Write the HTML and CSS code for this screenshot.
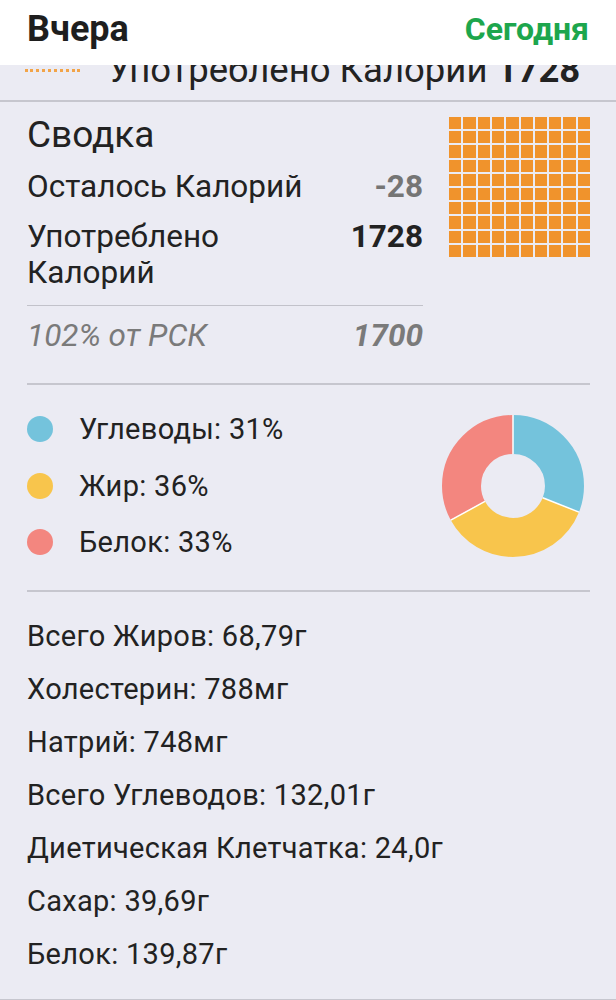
FILE: index.html
```html
<!DOCTYPE html>
<html lang="ru">

<head>
    <meta charset="UTF-8">
    <meta name="viewport" content="width=device-width, initial-scale=1.0">
    <title>Сводка</title>
    <link rel="stylesheet" href="styles.css">
</head>

<body>
    <header class="topbar">
        <span class="day">Вчера</span>
        <a class="today" href="#">Сегодня</a>
    </header>

    <!-- legend row of the chart above, scrolled under the bar -->
    <div class="peek">
        <div class="peek-line">
            <span class="dots"></span>
            <span class="peek-text">Употреблено Калорий <b>1728</b></span>
        </div>
    </div>

    <section class="summary">
        <div class="summary-info">
            <h2 class="title">Сводка</h2>
            <div class="row">
                <span>Осталось Калорий</span>
                <span class="remain">-28</span>
            </div>
            <div class="row">
                <span>Употреблено<br>Калорий</span>
                <b>1728</b>
            </div>
            <div class="row goal">
                <span>102% от РСК</span>
                <b>1700</b>
            </div>
        </div>
        <div class="squares" id="squares"></div>
    </section>

    <section class="macros">
        <ul class="legend">
            <li><span class="dot carbs"></span>Углеводы: 31%</li>
            <li><span class="dot fat"></span>Жир: 36%</li>
            <li><span class="dot protein"></span>Белок: 33%</li>
        </ul>
        <svg class="donut" width="142" height="142" viewBox="0 0 142 142">
            <g transform="rotate(-90 71 71)" fill="none" stroke-width="39">
                <circle cx="71" cy="71" r="51.5" stroke="#74c3dc" stroke-dasharray="100.31 323.58" />
                <circle cx="71" cy="71" r="51.5" stroke="#f8c54c" stroke-dasharray="116.49 323.58" stroke-dashoffset="-100.31" />
                <circle cx="71" cy="71" r="51.5" stroke="#f3867f" stroke-dasharray="106.78 323.58" stroke-dashoffset="-216.8" />
            </g>
            <g stroke="#fff" stroke-width="1.5">
                <line x1="71" y1="39" x2="71" y2="0" />
                <line x1="100.75" y1="82.78" x2="137.02" y2="97.14" />
                <line x1="42.96" y1="86.42" x2="8.78" y2="105.21" />
            </g>
        </svg>
    </section>

    <ul class="nutrients">
        <li>Всего Жиров: 68,79г</li>
        <li>Холестерин: 788мг</li>
        <li>Натрий: 748мг</li>
        <li>Всего Углеводов: 132,01г</li>
        <li>Диетическая Клетчатка: 24,0г</li>
        <li>Сахар: 39,69г</li>
        <li>Белок: 139,87г</li>
    </ul>

    <script>
        // 10x10 block of consumed calories
        var grid = document.getElementById('squares');
        for (var i = 0; i < 100; i++) {
            var cell = document.createElement('span');
            grid.appendChild(cell);
        }
    </script>
</body>

</html>
```

FILE: styles.css
```css
body {
    margin: 0;
    background: #ebebf3;
    color: #222;
    font-family: Roboto, "Noto Sans", sans-serif;
}

/* Top bar */

.topbar {
    height: 65px;
    box-sizing: border-box;
    background: #fff;
    display: flex;
    align-items: center;
    justify-content: space-between;
    padding: 0 27px 8px 27px;
}

.day {
    font-size: 36px;
    font-weight: bold;
    color: #1e1e1e;
}

.today {
    font-size: 32px;
    font-weight: bold;
    color: #1da64d;
    text-decoration: none;
}

/* Chart legend cut off under the bar */

.peek {
    height: 35px;
    overflow: hidden;
    border-bottom: 2px solid #c6c6ce;
}

.peek-line {
    display: flex;
    align-items: center;
    margin-top: -16px;
    padding-left: 25px;
    font-size: 36.5px;
    line-height: 42px;
}

.dots {
    width: 55px;
    border-top: 3px dotted #f2a448;
    margin-right: 28px;
}

/* Summary */

.summary {
    display: flex;
    gap: 26px;
    padding: 15px 26px 0 27px;
}

.summary-info {
    flex: 1;
    display: flex;
    flex-direction: column;
    gap: 14px;
    font-size: 31.5px;
    line-height: 36px;
    border-bottom: 2px solid #c6c6ce;
    margin-right: -167px;
}

.title {
    margin: -2px 0 0;
    font-size: 37px;
    line-height: 40px;
    font-weight: normal;
}

.row {
    display: flex;
    justify-content: space-between;
    width: 396px;
}

.remain {
    color: #757575;
    font-weight: bold;
}

.goal {
    border-top: 1px solid #c2c2ca;
    padding: 12px 0 29px;
    font-style: italic;
    color: #7a7a7a;
}

.squares {
    width: 141px;
    height: 140px;
    flex: none;
    display: grid;
    grid-template-columns: repeat(10, 1fr);
    grid-template-rows: repeat(10, 1fr);
    gap: 2px;
}

.squares span {
    background: #f0932c;
}

/* Macros */

.macros {
    display: flex;
    align-items: center;
    justify-content: space-between;
    margin: 0 26px 0 27px;
    padding: 16px 0 19px;
    border-bottom: 2px solid #c6c6ce;
}

.legend {
    list-style: none;
    margin: 0;
    padding: 0;
    font-size: 29px;
    letter-spacing: 0.3px;
    line-height: 56.5px;
}

.legend li {
    display: flex;
    align-items: center;
}

.dot {
    width: 26px;
    height: 26px;
    border-radius: 50%;
    margin-right: 26px;
}

.carbs {
    background: #74c3dc;
}

.fat {
    background: #f8c54c;
}

.protein {
    background: #f3867f;
}

.donut {
    margin-right: 6px;
}

/* Nutrient totals */

.nutrients {
    list-style: none;
    margin: 0;
    padding: 18px 27px 18px;
    font-size: 29px;
    letter-spacing: 0.3px;
    line-height: 53px;
    border-bottom: 2px solid #c6c6ce;
}
```
